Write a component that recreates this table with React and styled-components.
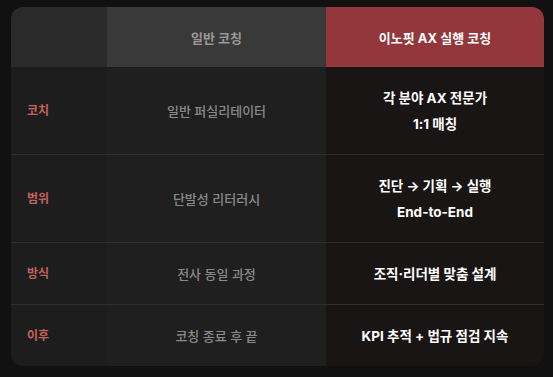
import React from "react";
import styled, { createGlobalStyle } from "styled-components";

const Global = createGlobalStyle`
  html, body { margin: 0; padding: 0; background: #111111; }
  body { font-family: Inter, "Noto Sans CJK KR", sans-serif; }
`;

const Page = styled.div`
  padding: 7px 9px 10px 11px;
`;

const Table = styled.div`
  border-radius: 12px;
  overflow: hidden;
  display: flex;
  flex-direction: column;
`;

const Row = styled.div`
  display: grid;
  grid-template-columns: 96px 219px 1fr;
  border-bottom: ${(p) => (p.$last ? "none" : "1px solid #2f2f2f")};
`;

const HeadCell = styled.div`
  height: 60px;
  display: flex;
  align-items: center;
  justify-content: center;
  font-size: 13px;
  font-weight: 700;
  background: ${(p) => p.$bg};
  color: ${(p) => p.$color};
`;

const Label = styled.div`
  background: #1d1d1d;
  display: flex;
  align-items: center;
  padding: 17.5px 16px;
  font-size: 12px;
  font-weight: 700;
  color: #c4625d;
  line-height: 26px;
`;

const Cell = styled.div`
  display: flex;
  flex-direction: column;
  align-items: center;
  justify-content: center;
  text-align: center;
  padding: 17.5px 12px;
  font-size: ${(p) => (p.$accent ? "13.5px" : "13px")};
  line-height: 26px;
  background: ${(p) => (p.$accent ? "#1a1515" : "#1f1f1f")};
  color: ${(p) => (p.$accent ? "#ffffff" : "#8a8a8a")};
  font-weight: ${(p) => (p.$accent ? 700 : 500)};
`;

const rows = [
  { label: "코치", general: ["일반 퍼실리테이터"], ax: ["각 분야 AX 전문가", "1:1 매칭"] },
  { label: "범위", general: ["단발성 리터러시"], ax: ["진단 → 기획 → 실행", "End-to-End"] },
  { label: "방식", general: ["전사 동일 과정"], ax: ["조직·리더별 맞춤 설계"] },
  { label: "이후", general: ["코칭 종료 후 끝"], ax: ["KPI 추적 + 법규 점검 지속"] },
];

export default function App() {
  return (
    <Page>
      <Global />
      <Table>
        <Row $last>
          <HeadCell $bg="#2a2a2a" $color="#9a9a9a" />
          <HeadCell $bg="#393939" $color="#9a9a9a">일반 코칭</HeadCell>
          <HeadCell $bg="#93373d" $color="#ffffff">이노핏 AX 실행 코칭</HeadCell>
        </Row>
        {rows.map((r, i) => (
          <Row key={r.label} $last={i === rows.length - 1}>
            <Label>{r.label}</Label>
            <Cell>
              {r.general.map((t) => (
                <span key={t}>{t}</span>
              ))}
            </Cell>
            <Cell $accent>
              {r.ax.map((t) => (
                <span key={t}>{t}</span>
              ))}
            </Cell>
          </Row>
        ))}
      </Table>
    </Page>
  );
}
